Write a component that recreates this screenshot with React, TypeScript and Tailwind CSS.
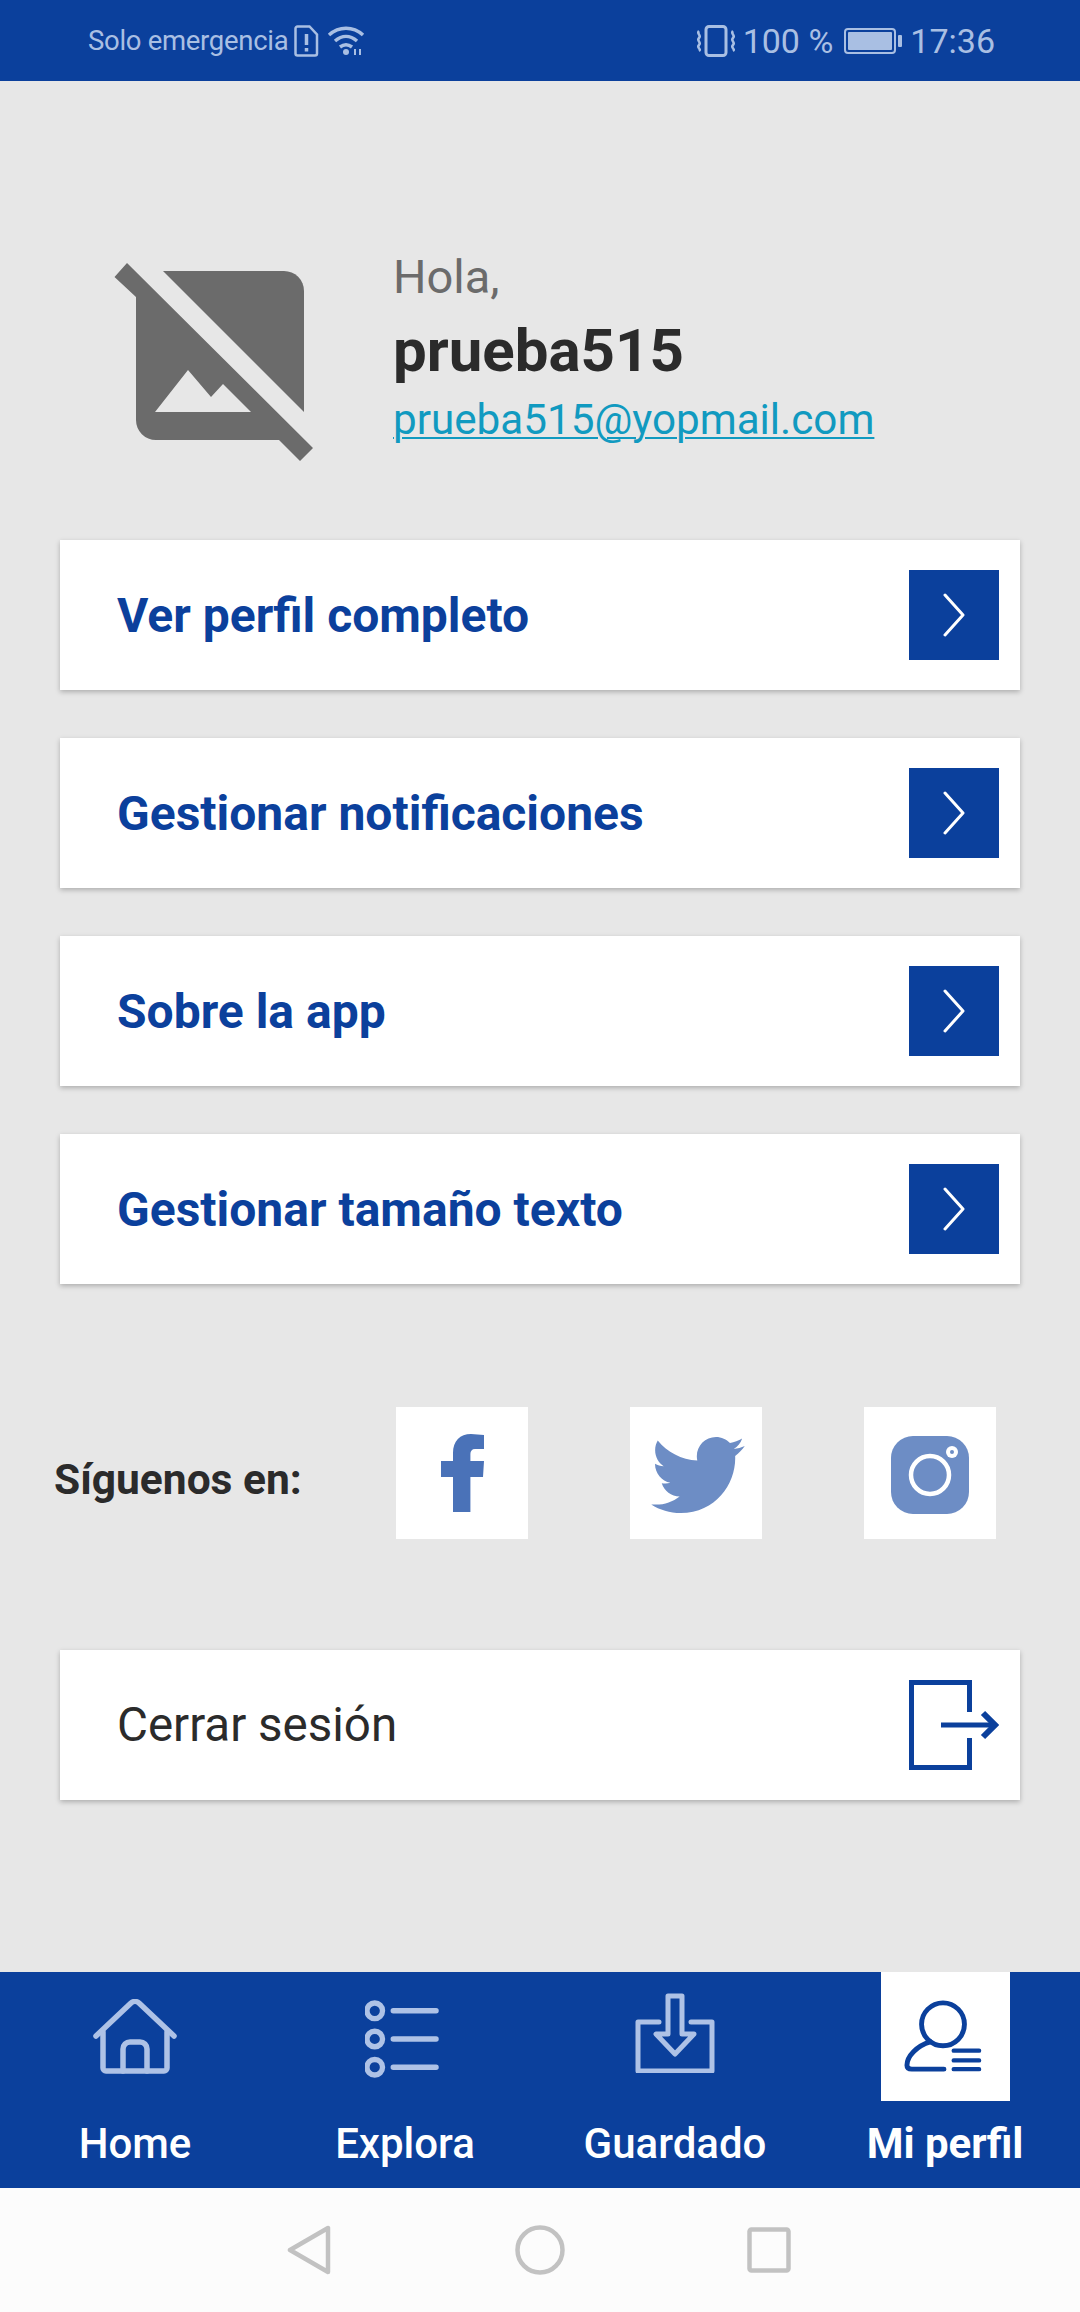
const menuItems = ["Ver perfil completo", "Gestionar notificaciones", "Sobre la app", "Gestionar tamaño texto"];

function StatusBar() {
  return (
    <div className="h-[81px] bg-[#0b409c] flex items-center pl-[88px] pr-[85px] text-[#a9bfe3] shrink-0">
      <span className="text-[27.5px] leading-none tracking-[-0.3px] mt-[1px]">Solo emergencia</span>
      <svg width="25" height="32" viewBox="0 0 24 32" className="ml-[6px]" fill="none" stroke="currentColor" strokeWidth="2.5">
        <path d="M3 1.5h12l7.5 8v19a2 2 0 0 1-2 2H3a2 2 0 0 1-2-2v-25a2 2 0 0 1 2-2z" />
        <path d="M12 9v11M12 23v3.5" strokeWidth="3.5" />
      </svg>
      <svg width="38" height="30" viewBox="0 0 38 30" className="ml-[8px]" fill="none" stroke="currentColor" strokeWidth="3.5">
        <path d="M2 9c10-9 24-9 34 0M8 15c7-6 15-6 22 0M13 21c4-3 8-3 12 0" />
        <circle cx="19" cy="26" r="3" fill="currentColor" stroke="none" />
        <path d="M28 29v-6M33 29v-6" strokeWidth="2" />
      </svg>
      <div className="flex-1" />
      <svg width="42" height="32" viewBox="0 0 42 32" fill="none" stroke="currentColor" strokeWidth="3">
        <rect x="11" y="1.5" width="20" height="29" rx="3" />
        <path d="M4 6c-3 3 3 4 0 7s3 4 0 7 3 4 0 6M38 6c-3 3 3 4 0 7s3 4 0 7 3 4 0 6" strokeWidth="2.5" />
      </svg>
      <span className="text-[34px] leading-none ml-[6px]">100 %</span>
      <svg width="58" height="26" viewBox="0 0 58 26" className="ml-[11px]" fill="none">
        <rect x="1" y="1" width="50" height="24" rx="3" stroke="currentColor" strokeWidth="2" />
        <rect x="4" y="4" width="44" height="18" rx="1" fill="currentColor" />
        <rect x="54" y="7" width="4" height="12" rx="1" fill="currentColor" />
      </svg>
      <span className="text-[34px] leading-none ml-[8px]">17:36</span>
    </div>
  );
}

function Avatar() {
  return (
    <svg width="200" height="200" viewBox="0 0 200 200" className="shrink-0">
      <path d="M49 8H170a20 20 0 0 1 20 20V149Z" fill="#6b6b6b" />
      <path d="M13 0L0.5 14L22 34V157a20 20 0 0 0 20 20H165L186 198L199 185Z" fill="#6b6b6b" />
      <path d="M41 149L74 107L97 134L109 121L137 149Z" fill="#e7e7e7" />
    </svg>
  );
}

function MenuCard({ label }: { label: string }) {
  return (
    <div className="h-[150px] bg-white shadow-[0_2px_5px_rgba(0,0,0,0.25)] flex items-center justify-between pl-[57px] pr-[21px]">
      <span className="text-[48px] font-bold text-[#0b409c] leading-none mt-[1px]">{label}</span>
      <div className="w-[90px] h-[90px] bg-[#0b409c] flex items-center justify-center">
        <svg width="24" height="44" viewBox="0 0 24 44" fill="none" stroke="#fff" strokeWidth="3" strokeLinecap="round" strokeLinejoin="round">
          <path d="M3 2l18 20L3 42" />
        </svg>
      </div>
    </div>
  );
}

function SocialBox({ children }: { children: React.ReactNode }) {
  return <div className="w-[132px] h-[132px] bg-white flex items-center justify-center">{children}</div>;
}

function NavItem({ label, active, children }: { label: string; active?: boolean; children: React.ReactNode }) {
  return (
    <div className="flex flex-col items-center">
      <div className={`w-[129px] h-[129px] flex items-center justify-center ${active ? "bg-white" : ""}`}>{children}</div>
      <span className={`mt-[19px] text-[42px] leading-[48px] text-white ${active ? "font-bold" : "font-medium"}`}>{label}</span>
    </div>
  );
}

export default function App() {
  return (
    <div className="w-[1080px] h-[2312px] flex flex-col bg-[#e7e7e7] font-['Roboto',sans-serif] overflow-hidden">
      <StatusBar />

      <main className="flex-1 px-[60px]">
        {/* header */}
        <div className="flex items-start pl-[54px] pt-[182px]">
          <Avatar />
          <div className="ml-[79px] -mt-[14px]">
            <p className="text-[47px] leading-[56px] text-[#6b6b6b]">Hola,</p>
            <p className="text-[60px] leading-[72px] font-bold text-[#2b2b2b] mt-[10px]">prueba515</p>
            <a className="block text-[42.2px] leading-[50px] text-[#119ac0] underline underline-offset-[3px] decoration-[2px] mt-[8px]">prueba515@yopmail.com</a>
          </div>
        </div>

        {/* menu */}
        <div className="flex flex-col gap-[48px] mt-[77px]">
          {menuItems.map((item) => (
            <MenuCard key={item} label={item} />
          ))}
        </div>

        {/* social */}
        <div className="flex items-center -ml-[6px] mt-[123px]">
          <span className="w-[342px] text-[42.5px] font-bold text-[#2b2b2b] leading-none mt-[15px]">Síguenos en:</span>
          <div className="flex gap-[102px]">
            <SocialBox>
              <svg width="43" height="78" viewBox="0 0 43 78" fill="#4a72b8">
                <path d="M43 1v14h-9c-3 0-4.6 2-4.6 5v7H43l-1 16H29.4v35H12V43H0V27h12v-8C12 7 19 0 30 0z" />
              </svg>
            </SocialBox>
            <SocialBox>
              <svg width="94" height="76" viewBox="0 0 512 416" fill="#6d8dc5" className="ml-[3px] mt-[3px]">
                <path d="M459.37 103.716c.325 4.548.325 9.097.325 13.645 0 138.72-105.583 298.558-298.558 298.558-59.452 0-114.68-17.219-161.137-47.106 8.447.974 16.568 1.299 25.34 1.299 49.055 0 94.213-16.568 130.274-44.832-46.132-.975-84.792-31.188-98.112-72.772 6.498.974 12.995 1.624 19.818 1.624 9.421 0 18.843-1.3 27.614-3.573-48.081-9.747-84.143-51.98-84.143-102.985v-1.299c13.969 7.797 30.214 12.67 47.431 13.319-28.264-18.843-46.781-51.005-46.781-87.391 0-19.492 5.197-37.36 14.294-52.954 51.655 63.675 129.3 105.258 216.365 109.807-1.624-7.797-2.599-15.918-2.599-24.04 0-57.828 46.782-104.934 104.934-104.934 30.213 0 57.502 12.67 76.67 33.137 23.715-4.548 46.456-13.32 66.599-25.34-7.798 24.366-24.366 44.833-46.132 57.827 21.117-2.273 41.584-8.122 60.426-16.243-14.292 20.791-32.161 39.308-52.628 54.253z" />
              </svg>
            </SocialBox>
            <SocialBox>
              <svg width="78" height="78" viewBox="0 0 78 78" className="mt-[3px]">
                <rect width="78" height="78" rx="22" fill="#6d8dc5" />
                <circle cx="39" cy="39" r="19" fill="none" stroke="#fff" strokeWidth="4.5" />
                <circle cx="61" cy="16" r="6" fill="#fff" />
                <circle cx="61" cy="16" r="2" fill="#6d8dc5" />
              </svg>
            </SocialBox>
          </div>
        </div>

        {/* logout */}
        <div className="h-[150px] bg-white shadow-[0_2px_5px_rgba(0,0,0,0.25)] flex items-center justify-between pl-[57px] pr-[21px] mt-[111px]">
          <span className="text-[47.5px] text-[#2b2b2b] leading-none mt-[1px]">Cerrar sesión</span>
          <svg width="90" height="90" viewBox="0 0 90 90" fill="none" stroke="#0b409c" strokeWidth="5">
            <path d="M60.5 32V2.5H2.5v85h58V58" />
            <path d="M32 45h54" />
            <path d="M74 33l12 12-12 12" strokeWidth="6" />
          </svg>
        </div>
      </main>

      {/* bottom nav */}
      <nav className="h-[216px] bg-[#0b409c] grid grid-cols-4 shrink-0">
        <NavItem label="Home">
          <svg width="84" height="76" viewBox="0 0 84 76" fill="none" stroke="#aec2e6" strokeWidth="5.5" strokeLinecap="round" strokeLinejoin="round" className="mt-[1px]">
            <path d="M3 37L38 4a6 6 0 0 1 8 0l35 33" />
            <path d="M10 33v36a3 3 0 0 0 3 3h58a3 3 0 0 0 3-3V33" />
            <path d="M30 72V50a7 7 0 0 1 7-7h10a7 7 0 0 1 7 7v22" />
          </svg>
        </NavItem>
        <NavItem label="Explora">
          <svg width="74" height="80" viewBox="0 0 76 80" fill="none" stroke="#aec2e6" strokeWidth="5.5" strokeLinecap="round" className="mt-[4px] -ml-[6px]">
            <circle cx="10" cy="11" r="8" />
            <circle cx="10" cy="40" r="8" />
            <circle cx="10" cy="69" r="8" />
            <path d="M29 11h44M29 40h44M29 69h44" />
          </svg>
        </NavItem>
        <NavItem label="Guardado">
          <svg width="80" height="80" viewBox="0 0 80 80" fill="none" stroke="#aec2e6" strokeWidth="5" strokeLinecap="round" strokeLinejoin="round" className="-mt-[8px] -ml-[1px]">
            <path d="M24 29H3v49h74V29H56" />
            <path d="M33 3h14v38h12L40 61 21 41h12z" />
          </svg>
        </NavItem>
        <NavItem label="Mi perfil" active>
          <svg width="78" height="74" viewBox="0 0 80 74" fill="none" stroke="#0b409c" strokeWidth="5" strokeLinecap="round" className="-ml-[4px] -mt-[1px]">
            <circle cx="40" cy="25" r="22" />
            <path d="M27 43C13 47 3 58 3 67c0 3 2 4 5 4h33" />
            <path d="M51 52h26M51 62h26M51 71h26" strokeWidth="4.5" />
          </svg>
        </NavItem>
      </nav>

      {/* android buttons */}
      <div className="h-[124px] bg-[#fcfcfc] flex items-center justify-center shrink-0">
        <svg width="44" height="50" viewBox="0 0 44 50" fill="none" stroke="#c2c2c2" strokeWidth="4.5" strokeLinejoin="round" className="ml-[-2px]">
          <path d="M41 3v44L3 25z" />
        </svg>
        <svg width="50" height="50" viewBox="0 0 50 50" fill="none" stroke="#c2c2c2" strokeWidth="4.5" className="ml-[184px]">
          <circle cx="25" cy="25" r="22.5" />
        </svg>
        <svg width="44" height="46" viewBox="0 0 44 46" fill="none" stroke="#c2c2c2" strokeWidth="4.5" strokeLinejoin="round" className="ml-[182px]">
          <rect x="2.5" y="2.5" width="39" height="41" rx="2" />
        </svg>
      </div>
    </div>
  );
}
